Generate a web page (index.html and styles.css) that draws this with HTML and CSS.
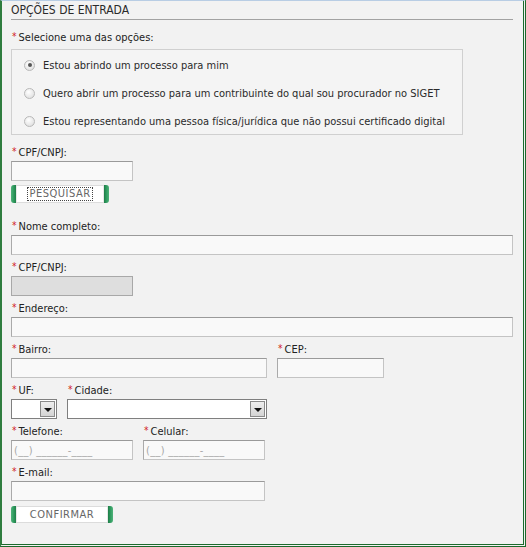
FILE: index.html
```html
<!DOCTYPE html>
<html lang="pt-BR">
<head>
<meta charset="utf-8">
<title>Opções de entrada</title>
<link rel="stylesheet" href="styles.css">
</head>
<body>
<div class="frame">
  <div class="content">
    <div class="header">OPÇÕES DE ENTRADA</div>

    <div class="label question"><span class="req">*</span>Selecione uma das opções:</div>
    <div class="options">
      <div class="option"><span class="radio checked"></span><span>Estou abrindo um processo para mim</span></div>
      <div class="option"><span class="radio"></span><span>Quero abrir um processo para um contribuinte do qual sou procurador no SIGET</span></div>
      <div class="option"><span class="radio"></span><span>Estou representando uma pessoa física/jurídica que não possui certificado digital</span></div>
    </div>

    <div class="field first w122">
      <div class="label"><span class="req">*</span>CPF/CNPJ:</div>
      <div class="input"></div>
    </div>
    <div class="btn btn-search"><span class="cap"></span><span class="btn-text"><span class="focus">PESQUISAR</span></span><span class="cap right"></span></div>

    <div class="field after-btn">
      <div class="label"><span class="req">*</span>Nome completo:</div>
      <div class="input"></div>
    </div>

    <div class="field w122">
      <div class="label"><span class="req">*</span>CPF/CNPJ:</div>
      <div class="input disabled"></div>
    </div>

    <div class="field">
      <div class="label"><span class="req">*</span>Endereço:</div>
      <div class="input"></div>
    </div>

    <div class="row">
      <div class="field w256">
        <div class="label"><span class="req">*</span>Bairro:</div>
        <div class="input"></div>
      </div>
      <div class="field w107">
        <div class="label"><span class="req">*</span>CEP:</div>
        <div class="input"></div>
      </div>
    </div>

    <div class="row">
      <div class="field w45">
        <div class="label"><span class="req">*</span>UF:</div>
        <div class="select"><span class="select-val"></span><span class="arrow"></span></div>
      </div>
      <div class="field w200">
        <div class="label"><span class="req">*</span>Cidade:</div>
        <div class="select"><span class="select-val"></span><span class="arrow"></span></div>
      </div>
    </div>

    <div class="row">
      <div class="field w122">
        <div class="label"><span class="req">*</span>Telefone:</div>
        <div class="input"><span class="mask">(__) ______-____</span></div>
      </div>
      <div class="field w122">
        <div class="label"><span class="req">*</span>Celular:</div>
        <div class="input"><span class="mask">(__) ______-____</span></div>
      </div>
    </div>

    <div class="field w254">
      <div class="label"><span class="req">*</span>E-mail:</div>
      <div class="input"></div>
    </div>

    <div class="btn btn-confirm"><span class="cap"></span><span class="btn-text">CONFIRMAR</span><span class="cap right"></span></div>
  </div>
</div>
</body>
</html>
```

FILE: styles.css
```css
html, body {
  margin: 0;
  padding: 0;
  background: #f2f2f2;
}

body {
  font-family: "DejaVu Sans Condensed", "DejaVu Sans", sans-serif;
  font-stretch: condensed;
  font-size: 11px;
  color: #222;
}

.frame {
  width: 526px;
  height: 547px;
  box-sizing: border-box;
  background: #f2f2f2;
  border-top: 1px solid #b8cde4;
  border-left: 2px solid #2f7d3f;
  border-right: 3px double #1c6a2c;
  border-bottom: 3px double #1c6a2c;
}

.content {
  margin-left: 9px;
  width: 502px;
}

.header {
  height: 18px;
  line-height: 18px;
  font-size: 12px;
  color: #2a2a2a;
  border-bottom: 1px solid #a2a2a2;
}

.label {
  height: 14px;
  line-height: 14px;
  white-space: nowrap;
  color: #222;
}

.req {
  color: #d02020;
  font-size: 10px;
  margin-left: 1px;
  margin-right: 2px;
  position: relative;
  top: -1px;
}

.question {
  margin-top: 11px;
}

.options {
  margin-top: 4px;
  width: 452px;
  box-sizing: border-box;
  height: 86px;
  border: 1px solid #d0d0d0;
  background: #f4f4f4;
  padding-top: 1px;
}

.option {
  display: flex;
  align-items: center;
  height: 28px;
  padding-left: 12px;
  white-space: nowrap;
  color: #2a2a2a;
}

.radio {
  width: 9px;
  height: 9px;
  border-radius: 50%;
  border: 1px solid #b8b8b8;
  background: radial-gradient(circle at 40% 35%, #ffffff 0%, #e4e4e4 70%, #d6d6d6 100%);
  margin-right: 8px;
  display: flex;
  align-items: center;
  justify-content: center;
  flex: none;
}

.radio.checked::after {
  content: "";
  width: 4px;
  height: 4px;
  border-radius: 50%;
  background: #555;
}

.field {
  margin-top: 6px;
  width: 502px;
}

.field.first {
  margin-top: 11px;
}

.field.after-btn {
  margin-top: 17px;
}

.w122 { width: 122px; }
.w256 { width: 256px; }
.w107 { width: 107px; }
.w45 { width: 46px; }
.w200 { width: 200px; }
.w254 { width: 254px; }

.row {
  display: flex;
  gap: 10px;
}

.row .field {
  flex: none;
}

.input {
  margin-top: 1px;
  height: 20px;
  box-sizing: border-box;
  border: 1px solid #c4c4c4;
  border-top-color: #9a9a9a;
  border-left-color: #aaaaaa;
  background: #f9f9f9;
  display: flex;
  align-items: center;
  padding-left: 2px;
}

.input.disabled {
  background: #dedede;
  border-color: #a8a8a8;
}

.mask {
  color: #a8a8a8;
  font-size: 11px;
  letter-spacing: 0.3px;
  white-space: nowrap;
}

.select {
  margin-top: 1px;
  height: 20px;
  box-sizing: border-box;
  border: 1px solid #7f7f7f;
  background: #fff;
  display: flex;
}

.select-val {
  flex: 1;
}

.arrow {
  width: 15px;
  box-sizing: border-box;
  border: 1px solid #8a8a8a;
  background: linear-gradient(#eeeeee, #d4d4d4);
  display: flex;
  align-items: center;
  justify-content: center;
  margin: 1px;
}

.arrow::after {
  content: "";
  width: 0;
  height: 0;
  border-left: 4px solid transparent;
  border-right: 4px solid transparent;
  border-top: 4px solid #111;
  margin-top: 1px;
}

.btn {
  display: flex;
  align-items: stretch;
  box-sizing: border-box;
  background: #fff;
  border-top: 1px solid #dcdcdc;
  border-bottom: 1px solid #dcdcdc;
  border-radius: 3px;
}

.btn-search {
  margin-top: 4px;
  width: 98px;
  height: 18px;
}

.btn-confirm {
  margin-top: 5px;
  width: 102px;
  height: 17px;
}

.cap {
  width: 5px;
  flex: none;
  margin: -1px 0;
  border-radius: 3px 0 0 3px;
  background: linear-gradient(90deg, #4fb27a 0%, #2e9a5e 55%, #1f7d48 100%);
}

.cap.right {
  border-radius: 0 3px 3px 0;
  background: linear-gradient(90deg, #1f7d48 0%, #2e9a5e 45%, #4fb27a 100%);
}

.btn-text {
  flex: 1;
  display: flex;
  align-items: center;
  justify-content: center;
  color: #666;
  font-size: 11px;
  letter-spacing: 0.5px;
  border-left: 1px solid #e8e8e8;
  border-right: 1px solid #e8e8e8;
}

.focus {
  outline: 1px dotted #444;
  outline-offset: 0;
  padding: 0 1px;
  line-height: 12px;
}
```
